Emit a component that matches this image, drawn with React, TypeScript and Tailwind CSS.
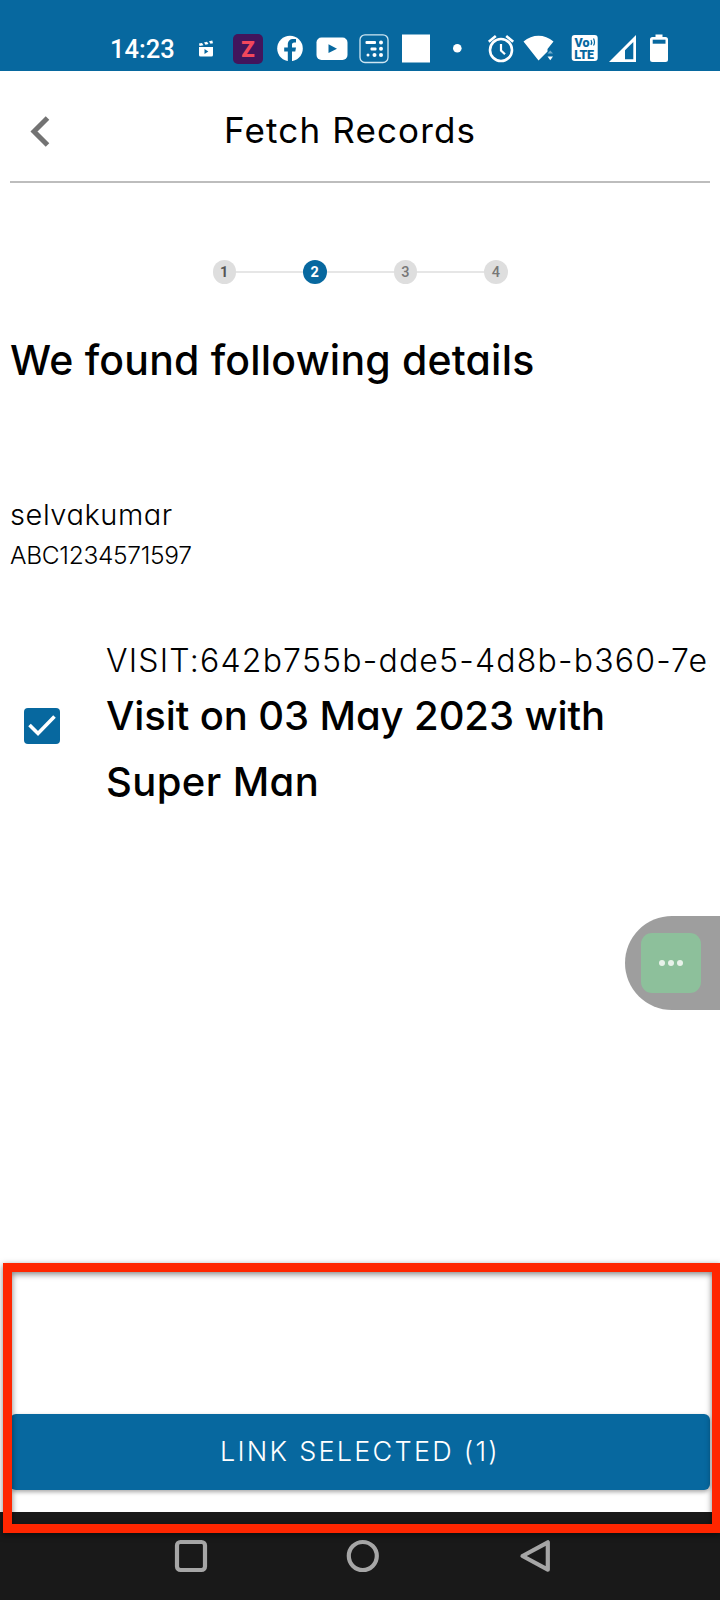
import React from "react";

const steps = [1, 2, 3, 4];

function NotificationIcons() {
  return (
    <svg width="270" height="36" viewBox="190 30 270 36" className="block">
      <g fill="#fff">
        <path d="M199 47h14v8a1.500 1.500 0 0 1-1.500 1.500h-11a1.500 1.500 0 0 1-1.500-1.500z" />
        <path d="M199 43.500l3-.6 1.500 2.300-4 .8zM204 42.400l3-.6 1.500 2.300-3 .7zM209 41.300l3.300-.7.7 2.600-2.500.6z" />
      </g>
      <path d="M204.500 49v5l3.800-2.500z" fill="#07689f" />
      <rect x="233" y="34" width="30" height="30" rx="5" fill="#42155c" />
      <text x="248" y="57" textAnchor="middle" fontSize="22" fontWeight="900" fontFamily="Roboto, sans-serif" fill="#f2475c">Z</text>
      <circle cx="290" cy="48.500" r="12.800" fill="#fff" />
      <path d="M287.800 62V51.500h-3.600v-4h3.600v-3c0-3.700 2.200-5.600 5.400-5.600 1.500 0 2.800.2 2.800.2v3.300h-1.700c-1.700 0-2.300 1-2.300 2.200v2.900h4l-.7 4h-3.300V62z" fill="#07689f" />
      <rect x="316.500" y="37.500" width="31" height="22.500" rx="5" fill="#fff" />
      <path d="M328.500 44.300v8.700l8.500-4.300z" fill="#07689f" />
      <rect x="360" y="34.800" width="28" height="27.700" rx="5" fill="none" stroke="#cfe6f2" strokeWidth="1.300" />
      <g fill="#fff">
        <rect x="365.500" y="41" width="10.500" height="3" rx="1" />
        <rect x="370.500" y="47.500" width="6" height="3" rx="1" />
        <circle cx="381" cy="42.500" r="2" />
        <circle cx="381" cy="48.800" r="2" />
        <circle cx="381" cy="55" r="2" />
        <circle cx="374.500" cy="55" r="2" />
        <circle cx="368" cy="55" r="1.500" />
        <rect x="402" y="34.500" width="28" height="28" />
      </g>
    </svg>
  );
}

function SystemIcons() {
  return (
    <svg width="230" height="36" viewBox="450 30 230 36" className="block">
      <circle cx="457.300" cy="48.200" r="4.300" fill="#fff" />
      <g fill="none" stroke="#fff">
        <circle cx="501" cy="50" r="11" strokeWidth="2.600" />
        <path d="M501 44v6.500l4 3.800" strokeWidth="2.200" />
        <path d="M488.800 41.700l7-5.700M513.200 41.700l-7-5.700" strokeWidth="2.600" />
      </g>
      <path d="M523.500 41.500C532.500 33.800 544.500 33.800 553.500 41.500L547.500 49v2.500L538.500 60.500z" fill="#fff" />
      <path d="M547.500 56.500h5.500l-2.750 3.800z" fill="#fff" />
      <path d="M547.500 53.500h5.500l-2.750-3z" fill="#6faacb" />
      <rect x="571.700" y="35" width="26" height="26" rx="3" fill="#fff" />
      <text fill="#07689f" fontFamily="Roboto, sans-serif" fontWeight="900" fontSize="12.500">
        <tspan x="574.500" y="47">Vo</tspan>
        <tspan x="574.300" y="58.800" letterSpacing="-0.4">LTE</tspan>
      </text>
      <path d="M591 40q1.500 2.500 0 5M593.500 38.500q2 4 0 7" fill="none" stroke="#07689f" strokeWidth="1.200" />
      <path d="M609 62L636 35v27z" fill="#fff" />
      <path d="M625 50.300L633.300 42v17.300H625z" fill="#07689f" />
      <path d="M655.500 34.500h7V37h3a2.500 2.500 0 0 1 2.500 2.500V59.500a2.500 2.500 0 0 1-2.500 2.500h-13a2.500 2.500 0 0 1-2.500-2.500V39.500a2.500 2.500 0 0 1 2.500-2.500h3z" fill="#fff" />
      <rect x="652.700" y="39.700" width="12.800" height="4" fill="#07689f" />
    </svg>
  );
}

function StatusBar() {
  return (
    <div className="flex h-[71px] shrink-0 items-start bg-[#07689f] pl-[110px]">
      <span className="mt-[31px] w-[80px] font-[Roboto,sans-serif] text-[25.5px] leading-[36px] font-medium text-white">
        14:23
      </span>
      <div className="mt-[30px] w-[260px] overflow-hidden">
        <NotificationIcons />
      </div>
      <div className="mt-[30px]">
        <SystemIcons />
      </div>
    </div>
  );
}

function Stepper() {
  return (
    <div className="mt-[77px] flex h-6 items-center justify-center">
      {steps.map((n) => (
        <React.Fragment key={n}>
          {n > 1 && <div className="h-[2px] w-[67px] bg-[#e6e6e6]" />}
          <div
            className={
              n === 2
                ? "flex size-[23.5px] items-center justify-center rounded-full bg-[#07689f] pt-[2px] font-[Roboto,sans-serif] text-[14.5px] font-bold text-white"
                : n === 1
                  ? "flex size-[23.5px] items-center justify-center rounded-full bg-[#dedede] pt-[2px] font-[Roboto,sans-serif] text-[14.5px] font-bold text-[#555]"
                  : "flex size-[23.5px] items-center justify-center rounded-full bg-[#dedede] pt-[2px] font-[Roboto,sans-serif] text-[14.5px] font-medium text-[#777]"
            }
          >
            {n}
          </div>
        </React.Fragment>
      ))}
    </div>
  );
}

export default function App() {
  return (
    <div className="relative flex h-[1600px] w-[720px] flex-col overflow-hidden bg-white font-[Inter,sans-serif] text-black [font-feature-settings:'cv11']">
      <StatusBar />

      <header className="mx-[10px] flex h-[112px] shrink-0 items-center border-b-2 border-[#bdbdbd]">
        <svg width="60" height="40" viewBox="0 0 60 40" className="mt-[10px] block">
          <path d="M37.500 7L24 20.500 37.500 34" fill="none" stroke="#737373" strokeWidth="5" />
        </svg>
        <h1 className="mt-[7px] ml-[154px] text-[35px] leading-[44px] tracking-[1.15px] whitespace-nowrap">Fetch Records</h1>
      </header>

      <Stepper />

      <main className="mt-[51px] flex flex-col px-[10px]">
        <h2 className="h-[50px] text-[41px] leading-[50px] font-medium tracking-[0.2px] whitespace-nowrap">
          We found following details
        </h2>
        <p className="mt-[110px] h-[40px] text-[29px] leading-[40px] font-light tracking-[0.55px]">selvakumar</p>
        <p className="h-[40px] text-[24.5px] leading-[40px] font-light tracking-[-0.3px]">ABC1234571597</p>

        <div className="mt-[64px] flex">
          <div className="mt-[69px] ml-[14px] flex size-9 shrink-0 items-center justify-center rounded-[4px] bg-[#07689f]">
            <svg width="36" height="36" viewBox="0 0 36 36">
              <path d="M5.500 17l8.500 8.500L30.500 8.500" fill="none" stroke="#fff" strokeWidth="3.600" />
            </svg>
          </div>
          <div className="ml-[46px] min-w-0 flex-1 overflow-hidden">
            <p className="h-[44px] overflow-hidden text-[32px] leading-[44px] font-light tracking-[1.2px] whitespace-nowrap">
              VISIT:642b755b-dde5-4d8b-b360-7e4
            </p>
            <p className="text-[40px] leading-[66px] font-medium tracking-[-0.1px] whitespace-nowrap">
              Visit on 03 May 2023 with
              <br />
              <span className="tracking-[0.4px]">Super Man</span>
            </p>
          </div>
        </div>
      </main>

      <div className="mt-auto px-[10px] pb-[22px]">
        <button className="flex h-[76px] w-full items-center justify-center rounded-[6px] bg-[#07689f] text-[27px] font-light tracking-[2.25px] text-white shadow-[0_2px_4px_rgba(0,0,0,0.35)]">
          LINK SELECTED (1)
        </button>
      </div>

      <nav className="h-[88px] shrink-0 bg-[#191919]">
        <svg width="720" height="88" viewBox="0 1512 720 88" fill="none" stroke="#a6a6a6" strokeWidth="4.200" className="block">
          <rect x="177" y="1542" width="28" height="28" rx="3.500" />
          <circle cx="362.800" cy="1556" r="14" />
          <path d="M547.800 1542.300v27.400L522.500 1556z" strokeLinejoin="round" />
        </svg>
      </nav>

      <div className="absolute top-[916px] right-0 flex h-[94px] w-[95px] items-center rounded-l-full bg-[#9e9e9e] pl-[16px]">
        <div className="flex size-[60px] items-center justify-center gap-[3px] rounded-[11px] bg-[#8dc09b]">
          <span className="size-[6px] rounded-full bg-[#e8f2ea]" />
          <span className="size-[6px] rounded-full bg-[#e8f2ea]" />
          <span className="size-[6px] rounded-full bg-[#e8f2ea]" />
        </div>
      </div>

      <div className="absolute top-[1263px] left-[3px] h-[270px] w-[718px] border-[9px] border-[#ff2600] drop-shadow-[0_2px_3px_rgba(0,0,0,0.5)]" />
    </div>
  );
}
